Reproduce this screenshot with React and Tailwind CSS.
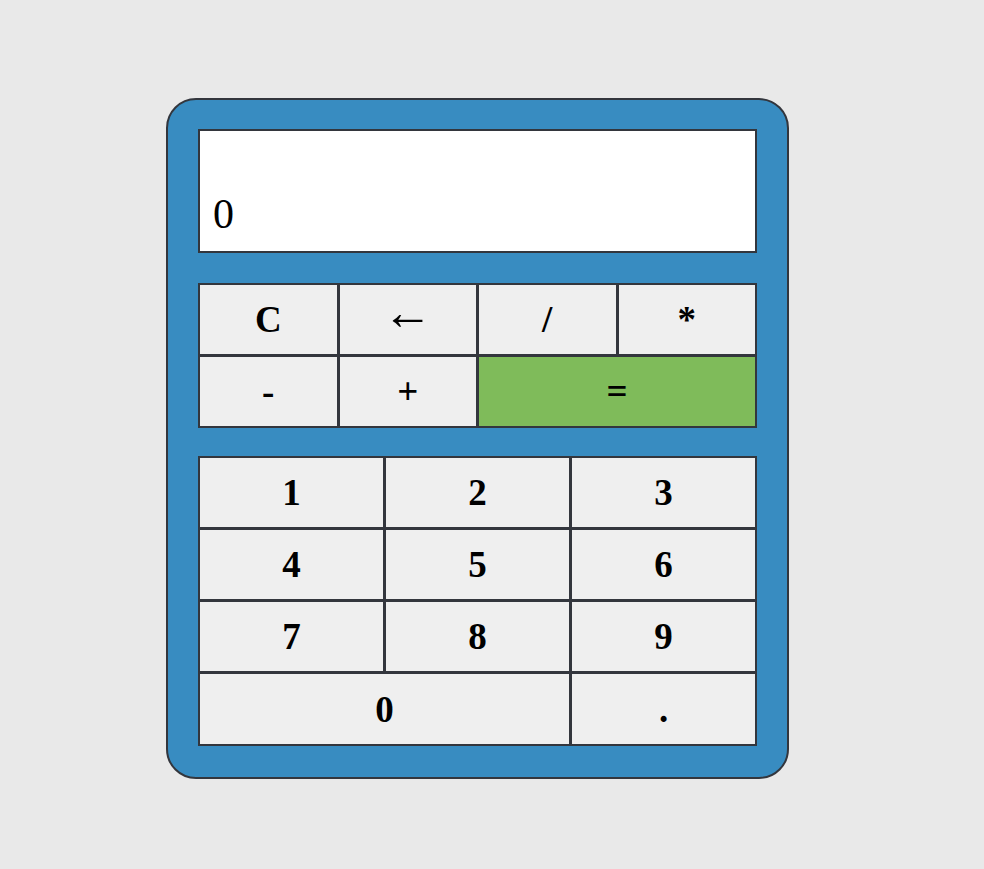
export default function App() {
    const ops = ["C", "←", "/", "*", "-", "+"];
    const nums = ["1", "2", "3", "4", "5", "6", "7", "8", "9"];

    return (
        <main className="min-h-screen w-full bg-[#e9e9e9] font-['Liberation_Serif',serif] text-black">
            <div className="pt-[98px] pl-[166px]">
                <div className="w-[623px] rounded-[30px] border-2 border-[#33363d] bg-[#388cc1] px-[30px] pt-[29px] pb-[31px]">
                    {/* Display */}
                    <div className="flex h-[124px] items-end border-2 border-[#33363d] bg-white px-[13px] pb-[16px] text-[42px] leading-none">
                        0
                    </div>

                    {/* Operators */}
                    <div className="mt-[30px] grid grid-cols-4 gap-[3px] border-2 border-[#33363d] bg-[#33363d]">
                        {ops.map((op) => (
                            <button
                                key={op}
                                className={
                                    op === "←"
                                        ? "flex h-[69px] items-center justify-center bg-[#efefef] pb-[15px] text-[50px] font-normal leading-none"
                                        : "flex h-[69px] items-center justify-center bg-[#efefef] text-[37px] font-bold leading-none"
                                }
                            >
                                {op}
                            </button>
                        ))}
                        <button className="col-span-2 flex h-[69px] items-center justify-center bg-[#7fbb5a] text-[37px] font-bold leading-none">
                            =
                        </button>
                    </div>

                    {/* Numbers */}
                    <div className="mt-[28px] grid grid-cols-3 gap-[3px] border-2 border-[#33363d] bg-[#33363d]">
                        {nums.map((n) => (
                            <button
                                key={n}
                                className="flex h-[69px] items-center justify-center bg-[#efefef] text-[37px] font-bold leading-none"
                            >
                                {n}
                            </button>
                        ))}
                        <button className="col-span-2 flex h-[70px] items-center justify-center bg-[#efefef] text-[37px] font-bold leading-none">
                            0
                        </button>
                        <button className="flex h-[70px] items-center justify-center bg-[#efefef] text-[37px] font-bold leading-none">
                            .
                        </button>
                    </div>
                </div>
            </div>
        </main>
    );
}
